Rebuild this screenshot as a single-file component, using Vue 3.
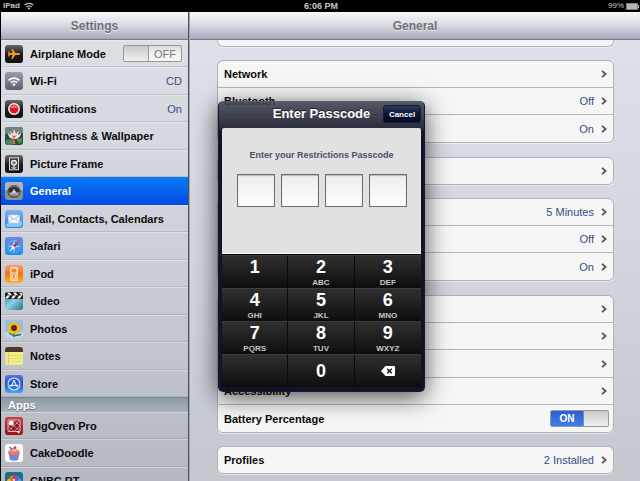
<!--
    iPad settings screen with the restrictions passcode dialog
-->

<template>
  <div class="screen">
    <!-- Icon shapes, used by name from the lists below -->
    <svg class="icon-defs" aria-hidden="true">
      <defs>
        <linearGradient id="g-dark" x1="0" y1="0" x2="0" y2="1">
          <stop offset="0" stop-color="#6a6a6a" /><stop offset="0.5" stop-color="#1e1e1e" /><stop offset="1" stop-color="#111" />
        </linearGradient>
        <linearGradient id="g-gray" x1="0" y1="0" x2="0" y2="1">
          <stop offset="0" stop-color="#9a9ea6" /><stop offset="1" stop-color="#5c616b" />
        </linearGradient>
        <linearGradient id="g-sky" x1="0" y1="0" x2="0" y2="1">
          <stop offset="0" stop-color="#7fb4ee" /><stop offset="1" stop-color="#1d86e6" />
        </linearGradient>
        <linearGradient id="g-safari" x1="0" y1="0" x2="0" y2="1">
          <stop offset="0" stop-color="#6f86e0" /><stop offset="1" stop-color="#1795ee" />
        </linearGradient>
        <linearGradient id="g-orange" x1="0" y1="0" x2="0" y2="1">
          <stop offset="0" stop-color="#f7a070" /><stop offset="0.5" stop-color="#f27412" /><stop offset="1" stop-color="#fbb62a" />
        </linearGradient>
        <linearGradient id="g-video" x1="0" y1="0" x2="1" y2="1">
          <stop offset="0" stop-color="#2a7f9c" /><stop offset="0.5" stop-color="#8fd0e0" /><stop offset="1" stop-color="#1c6f90" />
        </linearGradient>
        <linearGradient id="g-store" x1="0" y1="0" x2="0" y2="1">
          <stop offset="0" stop-color="#5878d8" /><stop offset="0.5" stop-color="#2453c4" /><stop offset="1" stop-color="#4aa6f0" />
        </linearGradient>
        <linearGradient id="g-red" x1="0" y1="0" x2="0" y2="1">
          <stop offset="0" stop-color="#c8404a" /><stop offset="1" stop-color="#a00c18" />
        </linearGradient>
      </defs>

      <symbol id="icon-airplane" viewBox="0 0 18 18">
        <rect width="18" height="18" rx="3" fill="url(#g-dark)" />
        <path d="M15 9c0-.7-.8-1-1.6-1h-3L7.500 4H6.200l1.400 4H5L3.800 6.600h-1L3.500 9l-.7 2.400h1L5 10h2.600l-1.400 4h1.300l2.900-4h3c.8 0 1.600-.3 1.600-1z" fill="#f79a1c" />
      </symbol>
      <symbol id="icon-wifi" viewBox="0 0 18 18">
        <rect width="18" height="18" rx="3" fill="url(#g-gray)" />
        <g fill="none" stroke="#fff" stroke-width="1.700">
          <path d="M3.600 8.300a7.600 7.600 0 0 1 10.800 0" />
          <path d="M5.900 10.600a4.400 4.400 0 0 1 6.200 0" />
        </g>
        <path d="M9 14.200l-1.800-2a2.600 2.600 0 0 1 3.600 0z" fill="#fff" />
      </symbol>
      <symbol id="icon-notifications" viewBox="0 0 18 18">
        <rect width="18" height="18" rx="3" fill="url(#g-dark)" />
        <circle cx="9" cy="9" r="5.200" fill="#e01822" stroke="#f4f4f4" stroke-width="1.500" />
        <path d="M5.200 8a4 4 0 0 1 7.600 0z" fill="#f26a6e" />
      </symbol>
      <symbol id="icon-brightness" viewBox="0 0 18 18">
        <rect width="18" height="18" rx="3" fill="#2c4a3c" />
        <path d="M0 3a3 3 0 0 1 3-3h12a3 3 0 0 1 3 3v3L0 7z" fill="#6f8579" />
        <path d="M1 13l6-1 3 3-4 3H3a3 3 0 0 1-2-2zM11 12l6-1v4l-3 2z" fill="#4f8a52" />
        <path d="M9 12C5 12 3 9 3 6l3 2-1-4 3 3 1-5 2 5 3-3-1 4 3-2c0 3-3 6-6 6z" fill="#fbdfe2" />
        <path d="M9 12L6.500 8 9 9l2.500-1z" fill="#e6566c" />
        <path d="M8.500 12h1l1 5h-3z" fill="#d9606c" />
      </symbol>
      <symbol id="icon-frame" viewBox="0 0 18 18">
        <rect width="18" height="18" rx="3" fill="url(#g-dark)" />
        <rect x="4.500" y="2.800" width="9" height="12" fill="#3b3b3b" stroke="#dcdcdc" />
        <circle cx="9" cy="7.700" r="2.400" fill="#777" stroke="#f2f2f2" stroke-width="1.300" />
        <path d="M9 10.200v3M6.600 12.600L9 13.300l2.400-.7" fill="none" stroke="#eee" />
      </symbol>
      <symbol id="icon-general" viewBox="0 0 18 18">
        <rect width="18" height="18" rx="3" fill="#8d8f92" />
        <path d="M0 8V3a3 3 0 0 1 3-3h12a3 3 0 0 1 3 3v5z" fill="#b4b4b6" />
        <circle cx="9" cy="9.500" r="5.800" fill="#8c8e91" stroke="#3a3a3a" stroke-width="1.600" stroke-dasharray="1.300 .7" />
        <path d="M3.500 9.500a5.500 4.500 0 0 1 11 0l-2.500 1-3-3-3 3z" fill="#2c2e31" />
        <path d="M9 7v3l4 3M9 10l-4 3" fill="none" stroke="#d8d8d8" />
        <circle cx="9" cy="10" r="1.500" fill="#d4d4d4" />
      </symbol>
      <symbol id="icon-mail" viewBox="0 0 18 18">
        <rect width="18" height="18" rx="3" fill="url(#g-sky)" />
        <path d="M1 14c3-2 5 0 7-1s5 0 9-2v3a3 3 0 0 1-3 3H4a3 3 0 0 1-3-3z" fill="#8cc6f6" />
        <rect x="3.500" y="5" width="11" height="8" rx="1" fill="#fff" stroke="#c6d4e6" stroke-width=".6" />
        <path d="M4 5.600l5 4 5-4M4 12.600l3.400-3.800M14 12.600l-3.400-3.800" fill="none" stroke="#7d9cc6" stroke-width=".8" />
      </symbol>
      <symbol id="icon-safari" viewBox="0 0 18 18">
        <rect width="18" height="18" rx="3" fill="url(#g-safari)" />
        <circle cx="9" cy="9.500" r="6" fill="none" stroke="#a9d4fb" stroke-width=".8" stroke-dasharray="1 1" />
        <path d="M9 3l1.300 5 5 1.500-5 1.300L9 16l-1.300-5.200-5-1.300 5-1.500z" fill="#9fd0fb" />
        <path d="M4 15l4-6.400 2 1.900z" fill="#eef6fd" />
        <path d="M14.800 3.200L8 8.600l2 1.900z" fill="#c8283c" />
      </symbol>
      <symbol id="icon-ipod" viewBox="0 0 18 18">
        <rect width="18" height="18" rx="3" fill="url(#g-orange)" />
        <rect x="5.800" y="2.800" width="6.400" height="12.400" rx="1" fill="none" stroke="#fff3e0" stroke-width="1.200" />
        <path d="M6 8h6" stroke="#fff3e0" />
        <circle cx="9" cy="11.500" r="1.700" fill="#ea5a10" stroke="#fff3e0" stroke-width="1.100" />
      </symbol>
      <symbol id="icon-video" viewBox="0 0 18 18">
        <rect width="18" height="18" rx="3" fill="url(#g-video)" />
        <path d="M0 7V3a3 3 0 0 1 3-3h12a3 3 0 0 1 3 3v4z" fill="#1b1b1b" />
        <path d="M2 .6h3l2 2.700H4zM8 .6h3l2 2.700h-3zM14 .6l2.500.4L18 3.300h-2zM2 3.600h3L3 6.400H0zM8 3.600h3L9 6.400H6zM14 3.600h3l-2 2.800h-3z" fill="#f2f2f2" />
      </symbol>
      <symbol id="icon-photos" viewBox="0 0 18 18">
        <rect width="18" height="18" rx="3" fill="#8fc0ec" />
        <path d="M0 12h18v3a3 3 0 0 1-3 3H3a3 3 0 0 1-3-3z" fill="#b9daf3" />
        <path d="M9 12v5M9 16l-5-3M10 16c2-2 4 0 6-2" fill="none" stroke="#2f6a2c" stroke-width="1.300" />
        <path d="M9 1l1.500 2.300L13 2.200l.3 2.700 2.700.4-1.200 2.400L16.500 9l-2.300 1.300.4 2.600-2.700-.4L10.300 15 9 12.800 7.700 15l-1.600-2.500-2.700.4.4-2.600L1.500 9l1.700-1.300L2 5.300l2.700-.4L5 2.200l2.500 1.100z" fill="#f8b414" />
        <circle cx="9" cy="8" r="2.900" fill="#4a2c12" />
      </symbol>
      <symbol id="icon-notes" viewBox="0 0 18 18">
        <rect width="18" height="18" rx="3" fill="#f3ee84" />
        <path d="M0 5V3a3 3 0 0 1 3-3h12a3 3 0 0 1 3 3v2z" fill="#50352a" />
        <path d="M1 8.500h16M1 11.500h16M1 14.500h16" stroke="#d8d276" stroke-width=".7" />
        <path d="M3.500 5v13" stroke="#e0b078" stroke-width=".6" />
      </symbol>
      <symbol id="icon-store" viewBox="0 0 18 18">
        <rect width="18" height="18" rx="3" fill="url(#g-store)" />
        <circle cx="9" cy="9" r="6" fill="none" stroke="#d8e8fb" stroke-width="1.100" />
        <path d="M5.700 12L9.400 5M12.300 12L8.600 5M4.600 10.300h8.800" fill="none" stroke="#d8e8fb" stroke-width="1.200" />
      </symbol>
      <symbol id="icon-bigoven" viewBox="0 0 18 18">
        <rect width="18" height="18" rx="3" fill="url(#g-red)" />
        <rect x="3" y="3" width="12" height="11.500" rx="1" fill="#8e1420" stroke="#f3c9cb" stroke-width=".9" />
        <path d="M3 9l6-6 6 6-6 5.500zM3 3l12 11.500M15 3L3 14.500" fill="none" stroke="#e8a4a8" stroke-width=".8" />
        <circle cx="6.300" cy="6" r="2.600" fill="#fff" />
        <path d="M11 14h4l-1 3z" fill="#f6dcdc" />
      </symbol>
      <symbol id="icon-cake" viewBox="0 0 18 18">
        <rect width="18" height="18" rx="3" fill="#fafafa" />
        <path d="M3.500 9.500h11L13 16q-4 1.500-8 0z" fill="#7b84d8" />
        <path d="M3 9q0-3 3-3.500Q9 2 12 5.500q3 .5 3 3.500-1 2-3 1-3 2-6 0-2 1-3-1z" fill="#ee7a66" />
        <path d="M5 6.500q4-3 8 0-4 2-8 0z" fill="#f8b7a6" />
        <path d="M4.500 3l3 3" stroke="#6a5ab0" stroke-width="1.200" />
        <circle cx="10" cy="3.500" r="1.300" fill="#c23a4c" />
      </symbol>
      <symbol id="icon-cnbc" viewBox="0 0 18 18">
        <rect width="18" height="18" rx="3" fill="#12708c" />
        <path d="M9 12L2 10q-.5-3 2.500-3.500z" fill="#f2b822" />
        <path d="M9 12L4 6q.5-3 4-2.500z" fill="#e8702a" />
        <path d="M9 12L8 3.500Q10 2 11 4z" fill="#d8365a" />
        <path d="M9 12l2-8.500q3.500 0 3.500 3z" fill="#7a5ac0" />
        <path d="M9 12l5.500-5.500q2.500.5 2 3.500z" fill="#4aa4e0" />
        <path d="M9 12l1-5H8z" fill="#fff" />
      </symbol>
    </svg>

    <header class="status-bar">
      <span class="status-left">
        iPad
        <svg class="status-wifi" viewBox="0 0 10 8" aria-hidden="true">
          <path d="M.6 3.200a6.200 6.200 0 0 1 8.800 0M2.400 5.100a3.700 3.700 0 0 1 5.200 0" fill="none" stroke="#c4c4c4" stroke-width="1.200" />
          <path d="M5 7.800L3.700 6.300a1.800 1.800 0 0 1 2.600 0z" fill="#c4c4c4" />
        </svg>
      </span>
      <span class="status-time">6:06 PM</span>
      <span class="status-right">
        99%
        <svg class="status-battery" viewBox="0 0 13 7" aria-hidden="true">
          <rect x=".5" y=".5" width="11" height="6" fill="#b4b4b4" stroke="#7d7d7d" />
          <path d="M12 2h1v3h-1z" fill="#b4b4b4" />
        </svg>
      </span>
    </header>

    <div class="panes">
      <nav class="sidebar">
        <h1 class="pane-title">Settings</h1>
        <ul class="menu">
          <li v-for="item in settings" :key="item.label" class="menu-row" :class="{ selected: item.label === selected }">
            <label v-if="item.toggle" class="menu-item">
              <svg class="menu-icon" aria-hidden="true"><use :href="'#icon-' + item.icon" /></svg>
              <span class="menu-label">{{ item.label }}</span>
              <span class="switch" :class="{ on: airplaneMode }">
                <input v-model="airplaneMode" type="checkbox" class="switch-input" />
                <span class="switch-text">{{ airplaneMode ? 'ON' : 'OFF' }}</span>
                <span class="switch-knob"></span>
              </span>
            </label>
            <button v-else type="button" class="menu-item" @click="selected = item.label">
              <svg class="menu-icon" aria-hidden="true"><use :href="'#icon-' + item.icon" /></svg>
              <span class="menu-label">{{ item.label }}</span>
              <span v-if="item.value" class="row-value">{{ item.value }}</span>
            </button>
          </li>
        </ul>
        <h2 class="menu-heading">Apps</h2>
        <ul class="menu">
          <li v-for="item in apps" :key="item.label" class="menu-row" :class="{ selected: item.label === selected }">
            <button type="button" class="menu-item" @click="selected = item.label">
              <svg class="menu-icon" aria-hidden="true"><use :href="'#icon-' + item.icon" /></svg>
              <span class="menu-label">{{ item.label }}</span>
            </button>
          </li>
        </ul>
      </nav>

      <main class="detail">
        <h1 class="pane-title">General</h1>
        <div class="groups">
          <!-- Bottom edge of the group that is scrolled under the title -->
          <div class="group group-tail"></div>
          <div v-for="(group, index) in groups" :key="index" class="group">
            <template v-for="(row, i) in group" :key="i">
              <label v-if="row.toggle" class="group-row">
                <span class="group-label">{{ row.label }}</span>
                <span class="switch" :class="{ on: batteryPercentage }">
                  <input v-model="batteryPercentage" type="checkbox" class="switch-input" />
                  <span class="switch-text">{{ batteryPercentage ? 'ON' : 'OFF' }}</span>
                  <span class="switch-knob"></span>
                </span>
              </label>
              <button v-else type="button" class="group-row">
                <span class="group-label">{{ row.label }}</span>
                <span v-if="row.value" class="row-value">{{ row.value }}</span>
                <svg class="chevron" viewBox="0 0 6 8" aria-hidden="true">
                  <path d="M1 .8L4.600 4 1 7.200" fill="none" stroke="#555" stroke-width="1.800" />
                </svg>
              </button>
            </template>
          </div>
        </div>
      </main>
    </div>

    <div class="overlay">
      <section class="dialog" role="dialog" aria-labelledby="dialog-title">
        <header class="dialog-header">
          <h2 id="dialog-title" class="dialog-title">Enter Passcode</h2>
          <button type="button" class="cancel" @click="passcode = ''">Cancel</button>
        </header>
        <div class="dialog-body">
          <p class="prompt">Enter your Restrictions Passcode</p>
          <div class="digits">
            <input
              v-for="n in 4"
              :key="n"
              class="digit"
              type="password"
              maxlength="1"
              readonly
              :aria-label="'Digit ' + n"
              :value="passcode[n - 1] || ''"
            />
          </div>
        </div>
        <div class="keypad">
          <template v-for="key in keys" :key="key.id">
            <span v-if="key.id === 'blank'" class="key"></span>
            <button v-else-if="key.id === 'delete'" type="button" class="key key-single" aria-label="Delete" @click="removeDigit">
              <svg class="delete-icon" viewBox="0 0 14 10" aria-hidden="true">
                <path d="M0 5l4.500-5H13q1 0 1 1v8q0 1-1 1H4.500z" fill="#fff" />
                <path d="M6.200 2.700l4.600 4.600M10.800 2.700L6.200 7.300" stroke="#161616" stroke-width="1.500" />
              </svg>
            </button>
            <button v-else type="button" class="key" :class="{ 'key-single': key.id === '0' }" @click="addDigit(key.id)">
              <span class="key-number">{{ key.id }}</span>
              <span v-if="key.letters" class="key-letters">{{ key.letters }}</span>
            </button>
          </template>
        </div>
      </section>
    </div>
  </div>
</template>

<script setup>
import { ref } from 'vue'

const selected = ref('General')
const airplaneMode = ref(false)
const batteryPercentage = ref(true)
const passcode = ref('')

const settings = [
  { label: 'Airplane Mode', icon: 'airplane', toggle: true },
  { label: 'Wi-Fi', icon: 'wifi', value: 'CD' },
  { label: 'Notifications', icon: 'notifications', value: 'On' },
  { label: 'Brightness & Wallpaper', icon: 'brightness' },
  { label: 'Picture Frame', icon: 'frame' },
  { label: 'General', icon: 'general' },
  { label: 'Mail, Contacts, Calendars', icon: 'mail' },
  { label: 'Safari', icon: 'safari' },
  { label: 'iPod', icon: 'ipod' },
  { label: 'Video', icon: 'video' },
  { label: 'Photos', icon: 'photos' },
  { label: 'Notes', icon: 'notes' },
  { label: 'Store', icon: 'store' }
]

const apps = [
  { label: 'BigOven Pro', icon: 'bigoven' },
  { label: 'CakeDoodle', icon: 'cake' },
  { label: 'CNBC RT', icon: 'cnbc' }
]

const groups = [
  [{ label: 'Network' }, { label: 'Bluetooth', value: 'Off' }, { value: 'On' }],
  [{}],
  [{ value: '5 Minutes' }, { value: 'Off' }, { value: 'On' }],
  [{}, {}, {}, { label: 'Accessibility' }, { label: 'Battery Percentage', toggle: true }],
  [{ label: 'Profiles', value: '2 Installed' }]
]

const keys = [
  { id: '1' },
  { id: '2', letters: 'ABC' },
  { id: '3', letters: 'DEF' },
  { id: '4', letters: 'GHI' },
  { id: '5', letters: 'JKL' },
  { id: '6', letters: 'MNO' },
  { id: '7', letters: 'PQRS' },
  { id: '8', letters: 'TUV' },
  { id: '9', letters: 'WXYZ' },
  { id: 'blank' },
  { id: '0' },
  { id: 'delete' }
]

const addDigit = (digit) => {
  if (passcode.value.length < 4) {
    passcode.value += digit
  }
}

const removeDigit = () => {
  passcode.value = passcode.value.slice(0, -1)
}
</script>

<style>
body {
  margin: 0;
  background: #000;
}
</style>

<style scoped>
.screen {
  position: relative;
  display: flex;
  flex-direction: column;
  height: 100vh;
  overflow: hidden;
  font-family: "Liberation Sans", Arial, sans-serif;
  font-size: 11px;
  color: #0a0a0a;
}

.screen * {
  box-sizing: border-box;
}

button {
  font: inherit;
  color: inherit;
  border: 0;
  padding: 0;
  background: none;
  text-align: left;
  cursor: pointer;
}

.icon-defs {
  position: absolute;
  width: 0;
  height: 0;
}

/* Status bar */
.status-bar {
  display: grid;
  grid-template-columns: 1fr auto 1fr;
  align-items: center;
  flex: none;
  height: 12px;
  padding: 0 1px 0 3px;
  background: #000;
  color: #c4c4c4;
  font-size: 8px;
  line-height: 12px;
}

.status-left,
.status-right {
  display: flex;
  align-items: center;
  gap: 4px;
}

.status-left {
  font-weight: bold;
}

.status-right {
  justify-content: flex-end;
  gap: 2px;
}

.status-time {
  font-size: 9px;
  font-weight: bold;
}

.status-wifi {
  width: 10px;
  height: 8px;
}

.status-battery {
  width: 13px;
  height: 7px;
}

/* Panes */
.panes {
  display: flex;
  flex: 1;
  min-height: 0;
}

.sidebar {
  flex: none;
  width: 189px;
  overflow: hidden;
  border-left: 1px solid #000;
  border-right: 1px solid #4c505a;
  background: linear-gradient(#dfe1e7, #cfd2da 45%, #b4b8c1);
}

.detail {
  flex: 1;
  min-width: 0;
  overflow: hidden;
  border-left: 1px solid #a3a6ae;
  background: linear-gradient(#e0e2eb, #d3d6de 50%, #c5c7ce);
}

.pane-title {
  height: 28px;
  margin: 0;
  border-bottom: 1px solid #757a88;
  background: linear-gradient(#f7f8fa, #dcdee5 45%, #a4a9ba);
  color: #6b6f79;
  font-size: 12px;
  line-height: 28px;
  text-align: center;
  text-shadow: 0 1px 0 #eee;
}

.menu {
  margin: 0;
  padding: 0;
  list-style: none;
}

.menu-row {
  height: 27px;
  border-top: 1px solid rgba(255, 255, 255, 0.3);
  border-bottom: 1px solid rgba(100, 105, 120, 0.2);
}

.menu-row:nth-child(even) {
  height: 28px;
}

.menu-row.selected {
  border-color: transparent;
  background: linear-gradient(#0a7cf6, #0348e4) border-box;
  color: #fff;
}

.menu-item {
  display: flex;
  align-items: center;
  width: 100%;
  height: 100%;
  padding: 0 6px 0 4px;
}

.menu-icon {
  flex: none;
  width: 18px;
  height: 18px;
  margin-right: 7px;
}

.menu-label {
  flex: 1;
  font-weight: bold;
  white-space: nowrap;
}

.menu-heading {
  height: 15px;
  margin: 0;
  padding-left: 7px;
  border-top: 1px solid #7b8790;
  background: linear-gradient(#8c9aa5, #aab2bc);
  color: #fff;
  font-size: 11px;
  line-height: 14px;
  text-shadow: 0 1px 1px #666;
}

.row-value {
  color: #324f85;
}

/* Switch */
.switch {
  position: relative;
  display: flex;
  flex: none;
  flex-direction: row-reverse;
  width: 59px;
  height: 17px;
  border: 1px solid #96989d;
  border-radius: 2px;
  background: linear-gradient(#d9d9dc, #f4f4f4 50%);
  overflow: hidden;
}

.switch.on {
  flex-direction: row;
  background: linear-gradient(#2d5fd0, #3d7ff0);
}

.switch-input {
  position: absolute;
  inset: 0;
  width: 100%;
  height: 100%;
  margin: 0;
  opacity: 0;
  cursor: pointer;
}

.switch-text {
  flex: 1;
  color: #777;
  line-height: 16px;
  text-align: center;
}

.switch.on .switch-text {
  color: #fff;
  font-size: 10px;
  font-weight: bold;
}

.switch-knob {
  width: 25px;
  border-right: 1px solid #96989d;
  background: linear-gradient(#c9c9cb, #f0f0f0);
}

.switch.on .switch-knob {
  border-right: 0;
  border-left: 1px solid #7c8cae;
}

/* Grouped rows */
.groups {
  padding: 0 26px 0 27px;
}

.group {
  margin-top: 14px;
  border: 1px solid #aeb1b8;
  border-radius: 6px;
  background: #f6f6f6;
  box-shadow: 0 1px 0 rgba(255, 255, 255, 0.5);
}

.group:nth-child(even) {
  margin-top: 13px;
}

.group-tail {
  height: 7px;
  margin-top: 0;
  border-top: 0;
  border-radius: 0 0 6px 6px;
}

.group-row {
  display: flex;
  align-items: center;
  width: 100%;
  height: 28px;
  padding: 0 6px;
  border-bottom: 1px solid #b4b6ba;
}

.group-row:first-child,
.group-row:nth-child(even) {
  height: 27px;
}

.group-row:last-child {
  height: 27px;
  border-bottom: 0;
}

.group-row:only-child {
  height: 26px;
}

.group-label {
  flex: 1;
  font-weight: bold;
}

.group .switch {
  margin-right: -2px;
}

.chevron {
  width: 6px;
  height: 8px;
  margin-left: 7px;
}

/* Passcode dialog */
.overlay {
  position: absolute;
  inset: 12px 0 0 0;
  display: flex;
  align-items: center;
  justify-content: center;
  padding-left: 3px;
  pointer-events: none;
}

.dialog {
  width: 207px;
  padding: 0 3px 4px;
  border: 1px solid #15182b;
  border-top-color: #5a5d69;
  border-radius: 5px;
  background: linear-gradient(rgba(66, 69, 84, 0.9), rgba(30, 33, 50, 0.94) 26px, rgba(10, 13, 32, 0.97) 30px);
  box-shadow: 0 5px 24px rgba(0, 0, 0, 0.7);
  pointer-events: auto;
}

.dialog-header {
  position: relative;
  height: 26px;
}

.dialog-title {
  margin: 0;
  color: #fff;
  font-size: 13px;
  line-height: 24px;
  text-align: center;
  text-shadow: 0 -1px 0 #222;
}

.cancel {
  position: absolute;
  top: 3px;
  right: 0;
  width: 38px;
  height: 18px;
  border: 1px solid #141a30;
  border-radius: 3px;
  background: linear-gradient(#303a5a, #0b1436 50%, #050c28);
  color: #fff;
  font-size: 8px;
  font-weight: bold;
  text-align: center;
}

.dialog-body {
  height: 126px;
  padding-top: 20px;
  border-bottom: 1px solid #fff;
  border-radius: 2px 2px 0 0;
  background: #e1e1e2;
}

.prompt {
  margin: 0 0 12px;
  color: #46506a;
  font-size: 9px;
  font-weight: bold;
  line-height: 14px;
  text-align: center;
}

.digits {
  display: flex;
  justify-content: center;
  gap: 6px;
}

.digit {
  width: 38px;
  height: 33px;
  padding: 0;
  border: 1px solid #6c6c6c;
  border-radius: 0;
  background: linear-gradient(#ececec, #fff);
  box-shadow: inset 0 1px 1px #bbb;
  font-size: 18px;
  text-align: center;
  outline: none;
}

.keypad {
  display: grid;
  grid-template-columns: repeat(3, 1fr);
  border-top: 1px solid #000;
}

.key {
  display: flex;
  flex-direction: column;
  align-items: center;
  height: 33px;
  padding-top: 1px;
  border-top: 1px solid #3c3c3c;
  border-right: 1px solid #090909;
  background: linear-gradient(#303030, #0d0d0d);
  color: #fff;
}

.key:nth-child(3n) {
  border-right: 0;
}

.key-single {
  justify-content: center;
  padding-top: 0;
}

.key-number {
  font-size: 18px;
  font-weight: bold;
  line-height: 21px;
}

.key-letters {
  color: #c8c8c8;
  font-size: 8px;
  font-weight: bold;
  line-height: 9px;
}

.delete-icon {
  width: 14px;
  height: 10px;
}
</style>
